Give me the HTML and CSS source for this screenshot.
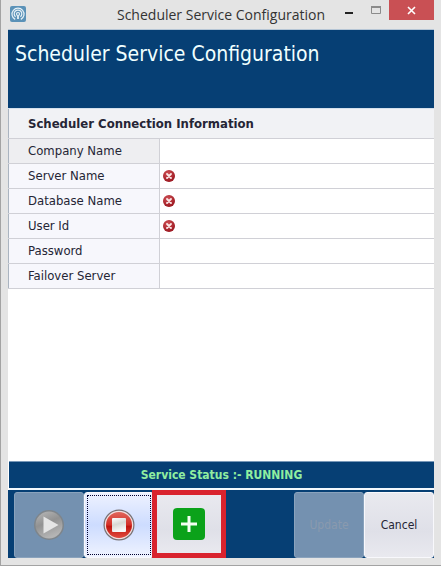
FILE: index.html
```html
<!DOCTYPE html>
<html lang="en">
<head>
<meta charset="utf-8">
<title>Scheduler Service Configuration</title>
<link rel="stylesheet" href="styles.css">
</head>
<body>
<svg class="defs" aria-hidden="true">
  <defs>
    <radialGradient id="errorFill" cx="40%" cy="30%" r="75%"><stop offset="0" stop-color="#cf5055"/><stop offset="1" stop-color="#98131c"/></radialGradient>
    <linearGradient id="playFill" x1="0" y1="0" x2="0.4" y2="1"><stop offset="0" stop-color="#b9b9b9"/><stop offset="0.5" stop-color="#929292"/><stop offset="1" stop-color="#b4b4b4"/></linearGradient>
    <linearGradient id="stopFill" x1="0" y1="0" x2="0" y2="1"><stop offset="0" stop-color="#e0675c"/><stop offset="0.5" stop-color="#d32f27"/><stop offset="0.55" stop-color="#c0150f"/><stop offset="1" stop-color="#e04a3e"/></linearGradient>
    <linearGradient id="squareFill" x1="0" y1="0" x2="0.3" y2="1"><stop offset="0" stop-color="#ffffff"/><stop offset="0.5" stop-color="#d8d8d4"/><stop offset="1" stop-color="#f8f8f8"/></linearGradient>
    <symbol id="error" viewBox="0 0 12 12"><circle cx="6" cy="6" r="6" fill="url(#errorFill)"/><path d="M4 4l4 4M8 4l-4 4" stroke="#fbe9e9" stroke-width="1.8" stroke-linecap="round"/></symbol>
  </defs>
</svg>
<main class="window">
  <header class="titlebar">
    <svg class="app-icon" viewBox="0 0 16 16" aria-hidden="true">
      <rect width="16" height="16" rx="2" fill="#5b92b8"/>
      <g fill="none" stroke="#e6f1f7" stroke-width="1.2"><path d="M5.2 13.4a6 6 0 1 1 5.6 0"/><path d="M5.6 10.8a3.8 3.8 0 1 1 4.8 0"/><circle cx="8" cy="8" r="1.5"/><path d="M8 9.5V13" stroke-width="1.8"/></g>
    </svg>
    <span class="titlebar-text">Scheduler Service Configuration</span>
    <div class="window-controls">
      <button class="control" aria-label="Minimize"><svg width="26" height="20"><path d="M10 13h8" stroke="#222" stroke-width="2"/></svg></button>
      <button class="control" aria-label="Maximize" disabled><svg width="28" height="20"><path d="M10.500 6.500h9v7h-9z" fill="none" stroke="#8b8b8b"/><path d="M10 7h10" stroke="#8b8b8b" stroke-width="2"/></svg></button>
      <button class="control control-close" aria-label="Close"><svg width="45" height="20"><path d="M19 7l7 7M26 7l-7 7" stroke="#fff" stroke-width="1.6"/></svg></button>
    </div>
  </header>
  <section class="content">
    <div class="banner"><h1>Scheduler Service Configuration</h1></div>
    <table class="properties">
      <thead><tr><th colspan="2">Scheduler Connection Information</th></tr></thead>
      <tbody>
        <tr class="selected"><th><label for="company">Company Name</label></th><td><div class="field"><input id="company" type="text"></div></td></tr>
        <tr><th><label for="server">Server Name</label></th><td><div class="field"><svg class="error"><use href="#error"/></svg><input id="server" type="text"></div></td></tr>
        <tr><th><label for="database">Database Name</label></th><td><div class="field"><svg class="error"><use href="#error"/></svg><input id="database" type="text"></div></td></tr>
        <tr><th><label for="user">User Id</label></th><td><div class="field"><svg class="error"><use href="#error"/></svg><input id="user" type="text"></div></td></tr>
        <tr><th><label for="password">Password</label></th><td><div class="field"><input id="password" type="password"></div></td></tr>
        <tr><th><label for="failover">Failover Server</label></th><td><div class="field"><input id="failover" type="text"></div></td></tr>
      </tbody>
    </table>
    <p class="status">Service Status :- RUNNING</p>
    <footer class="toolbar">
      <button class="tool" disabled aria-label="Start service">
        <svg width="32" height="32" viewBox="0 0 32 32"><circle cx="16" cy="16" r="15" fill="#7e858b"/><circle cx="16" cy="16" r="13.500" fill="url(#playFill)"/><path d="M10.500 7.500v17l15-8.500z" fill="#e5e5e5"/></svg>
      </button>
      <button class="tool tool-focused" aria-label="Stop service">
        <svg width="32" height="32" viewBox="0 0 32 32"><circle cx="16" cy="16" r="15.500" fill="#777174"/><circle cx="16" cy="16" r="14.300" fill="#f2dfe0"/><circle cx="16" cy="16" r="13" fill="url(#stopFill)"/><rect x="9" y="9" width="14" height="14" rx="1" fill="url(#squareFill)"/></svg>
      </button>
      <button class="tool tool-marked" aria-label="Add service">
        <svg width="32" height="32" viewBox="0 0 32 32"><rect width="32" height="32" rx="4" fill="#0ba21a"/><path d="M16 8v16M8 16h16" stroke="#f4fff2" stroke-width="3"/></svg>
      </button>
      <button class="tool tool-end" disabled>Update</button>
      <button class="tool">Cancel</button>
    </footer>
  </section>
</main>
</body>
</html>
```
FILE: styles.css
```css
* { box-sizing: border-box; }
body {
  margin: 0;
  font: 13px/16px "DejaVu Sans Condensed", "DejaVu Sans", sans-serif;
  color: #252535;
}
button, input { font: inherit; color: inherit; }
svg { display: block; flex: none; }
.defs { position: absolute; width: 0; height: 0; }
.window {
  display: flex;
  flex-direction: column;
  min-height: 100vh;
  padding: 0 7px 7px;
  background: #e4e4e4;
  border: 1px solid #a3a3a3;
  border-top: 0;
  border-right: 0;
}
.titlebar {
  display: grid;
  grid-template-columns: 1fr auto 1fr;
  align-items: start;
  height: 29px;
}
.app-icon { width: 16px; height: 16px; margin: 6px 0 0 2px; }
.titlebar-text {
  padding-top: 5px;
  white-space: nowrap;
  font: 14px/20px "Open Sans", sans-serif;
  color: #333;
}
.window-controls { display: flex; justify-content: flex-end; }
.control { padding: 0; border: 0; background: none; }
.control-close { background: #c95054; }
.content {
  display: flex;
  flex: 1;
  flex-direction: column;
  background: #fff;
  border-top: 1px solid #b5c5d5;
}
.banner {
  height: 78px;
  padding: 10px 7px;
  background: #063f74;
}
h1 {
  margin: 0;
  font-size: 21px;
  font-weight: normal;
  line-height: 28px;
  white-space: nowrap;
  color: #f0ffff;
}
.properties {
  width: 100%;
  border-collapse: collapse;
  border-left: 1px solid #aab4c0;
}
.properties th, .properties td {
  height: 25px;
  padding: 0;
  border-bottom: 1px solid #d0d0d6;
}
.properties th {
  width: 151px;
  padding-left: 19px;
  text-align: left;
  font-weight: normal;
  background: #f7f7fc;
}
.properties tbody th { border-right: 1px solid #d0d0d6; }
.properties thead th {
  height: 30px;
  font-weight: bold;
  background: #f1f2f5;
  border-top: 1px solid #d4e0ec;
}
.properties .selected th { background: #eeeef1; }
.field { display: flex; align-items: center; padding-left: 3px; }
.field input {
  flex: 1;
  min-width: 0;
  height: 20px;
  padding: 0 4px;
  border: 0;
  outline: 0;
  background: none;
}
.error { width: 12px; height: 12px; }
.status {
  margin: auto 0 0 1px;
  padding: 5px 0;
  border-top: 1px solid #7898b8;
  border-bottom: 2px solid #f3f8fc;
  background: #063f74;
  color: #90eea0;
  font-size: 12px;
  font-weight: bold;
  text-align: center;
}
.toolbar {
  display: flex;
  padding: 2px 0 0 6px;
  background: #063f74;
}
.tool {
  display: flex;
  align-items: center;
  justify-content: center;
  width: 70px;
  height: 66px;
  padding: 0;
  border: 1px solid #f8f8fc;
  border-radius: 3px;
  background: linear-gradient(#e9e9ef, #dfe0e8 60%, #e9e9ef);
  font-size: 12px;
}
.tool:disabled {
  border-color: #8aa3bd;
  background: #7491b0;
  color: #8a9aae;
}
.tool-focused {
  background: linear-gradient(#eef2ff, #cddcff 50%, #eff3ff);
  outline: 1px dotted #000030;
  outline-offset: -4px;
}
.tool-marked {
  width: 74px;
  height: 68px;
  margin: -2px 0 0 -2px;
  border: 5px solid #d9232e;
  border-radius: 0;
  z-index: 1;
}
.tool-end { margin-left: auto; }
```
